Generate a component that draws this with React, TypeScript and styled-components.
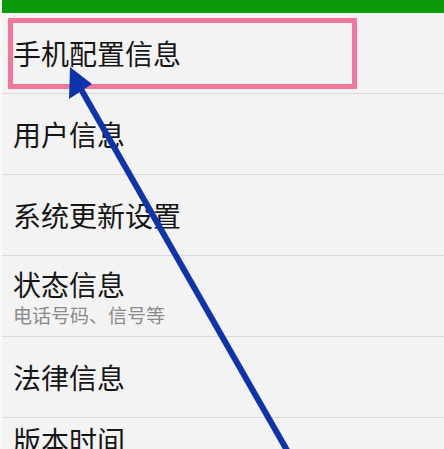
import React from 'react'
import styled, { createGlobalStyle } from 'styled-components';

const GlobalStyle = createGlobalStyle`
    html, body {
        margin: 0;
        padding: 0;
        background-color: #f3f3f3;
        overflow: hidden;
    }
    body {
        font-family: "Noto Sans CJK SC", "Noto Sans", sans-serif;
    }
`

const Screen = styled.div`
    position: relative;
    width: 444px;
    height: 449px;
    overflow: hidden;
    background-color: #f3f3f3;
    border-left: 2px solid #f8faf8;
    box-sizing: border-box;
`

const TopBar = styled.div`
    height: 13px;
    background-color: #0a9a0a;
`

const List = styled.div`
    display: flex;
    flex-direction: column;
`

const Row = styled.div<{ $top?: boolean }>`
    position: relative;
    height: 80px;
    display: flex;
    flex-direction: column;
    justify-content: ${p => p.$top ? 'flex-start' : 'center'};
    padding: ${p => p.$top ? '5px 11px 0' : '0 11px'};
    border-bottom: 1px solid #dadada;
    box-sizing: content-box;
`

const Title = styled.div`
    font-size: 28px;
    line-height: 34px;
    color: #161616;
    white-space: nowrap;
`

const Subtitle = styled.div`
    margin-top: 3px;
    font-size: 19px;
    line-height: 22px;
    color: #8a8a8a;
    white-space: nowrap;
`

const Highlight = styled.div`
    position: absolute;
    left: 6px;
    top: 5px;
    width: 349px;
    height: 71px;
    border: 5px solid #f2769a;
    box-sizing: border-box;
    pointer-events: none;
`

const ArrowLayer = styled.svg`
    position: absolute;
    left: -2px;
    top: 0;
    pointer-events: none;
`

type Item = { title: string, sub?: string, top?: boolean };

const items: Item[] = [
    { title: '手机配置信息' },
    { title: '用户信息' },
    { title: '系统更新设置' },
    { title: '状态信息', sub: '电话号码、信号等' },
    { title: '法律信息' },
    { title: '版本时间', top: true },
];

export default function App() {
    return (
        <Screen>
            <GlobalStyle />
            <TopBar />
            <List>
                {items.map((item, i) => (
                    <Row key={item.title} $top={item.top}>
                        {i === 0 && <Highlight />}
                        <Title>{item.title}</Title>
                        {item.sub && <Subtitle>{item.sub}</Subtitle>}
                    </Row>
                ))}
            </List>
            <ArrowLayer width="444" height="449" viewBox="0 0 444 449">
                <line x1="78" y1="84" x2="288" y2="452" stroke="#0f33aa" strokeWidth="6" />
                <polygon points="70,67 69,99 92,84" fill="#0f33aa" />
            </ArrowLayer>
        </Screen>
    );
}
